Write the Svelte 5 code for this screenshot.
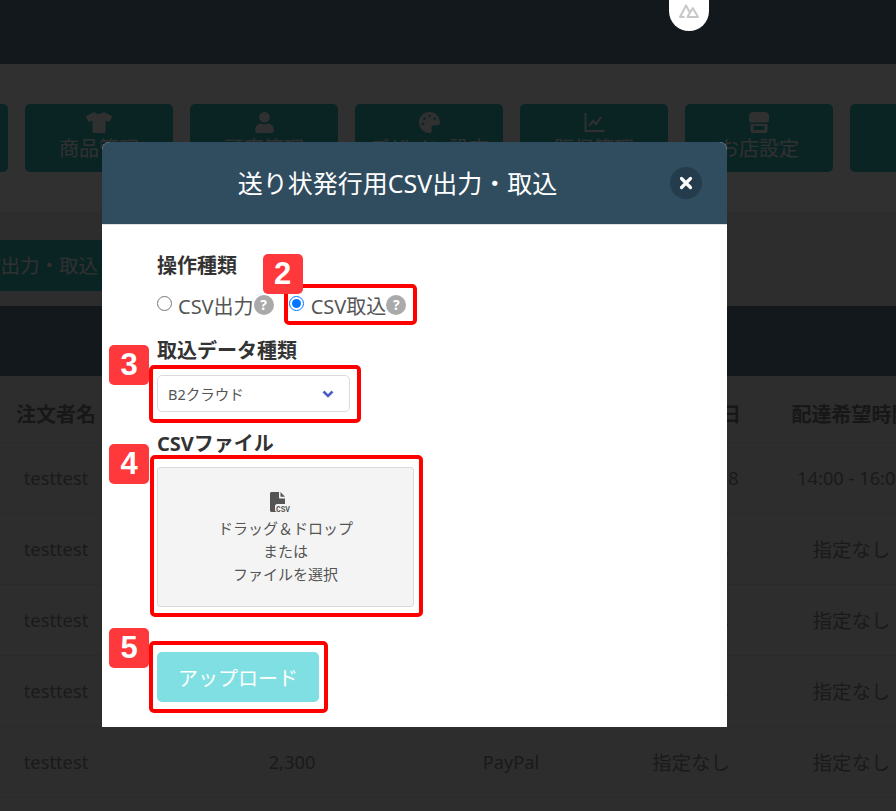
<script>
  const navItems = [
    { label: '受注管理', icon: 'none' },
    { label: '商品管理', icon: 'shirt' },
    { label: '顧客管理', icon: 'user' },
    { label: 'デザイン設定', icon: 'palette' },
    { label: '販促管理', icon: 'chart' },
    { label: 'お店設定', icon: 'store' },
    { label: 'ヘルプ', icon: 'none' }
  ]
  const rows = [
    { date: '2024-01-18', time: '14:00 - 16:00' },
    { date: '指定なし', time: '指定なし' },
    { date: '指定なし', time: '指定なし' },
    { date: '指定なし', time: '指定なし' },
    { date: '指定なし', time: '指定なし' }
  ]
</script>

<div class="page">
  <header class="topbar"></header>

  <nav class="menu">
    {#each navItems as item}
      <div class="menuBtn">
        <span class="menuIcon">
          {#if item.icon === 'shirt'}
            <svg width="26" height="21" viewBox="0 0 640 512"><path fill="currentColor" d="M631.2 96.5L436.5 0C416.4 27.8 371.9 47.2 320 47.2S223.6 27.8 203.5 0L8.8 96.5c-7.9 4-11.1 13.6-7.2 21.5l57.2 114.5c4 7.9 13.6 11.1 21.5 7.2l56.6-27.7c10.6-5.2 23 2.5 23 14.4V480c0 17.7 14.3 32 32 32h256c17.7 0 32-14.3 32-32V226.3c0-11.8 12.4-19.6 23-14.4l56.6 27.7c7.9 4 17.5.8 21.5-7.2L638.3 118c4-7.9.8-17.6-7.1-21.5z"/></svg>
          {:else if item.icon === 'user'}
            <svg width="19" height="21" viewBox="0 0 448 512"><path fill="currentColor" d="M224 256c70.7 0 128-57.3 128-128S294.7 0 224 0 96 57.3 96 128s57.3 128 128 128zm89.6 32h-16.7c-22.2 10.2-46.9 16-72.9 16s-50.6-5.8-72.9-16h-16.7C60.2 288 0 348.2 0 422.4V464c0 26.5 21.5 48 48 48h352c26.5 0 48-21.5 48-48v-41.6c0-74.2-60.2-134.4-134.4-134.4z"/></svg>
          {:else if item.icon === 'palette'}
            <svg width="21" height="21" viewBox="0 0 512 512"><path fill="currentColor" d="M204.3 5C104.9 24.4 24.8 104.3 5.2 203.4c-37 187 131.7 326.4 258.8 306.7 41.2-6.4 61.4-54.6 42.5-91.7-23.1-45.4 9.9-98.4 60.9-98.4h79.7c35.8 0 64.8-29.6 64.9-65.3C511.5 97.1 368.1-26.9 204.3 5zM96 320c-17.7 0-32-14.3-32-32s14.3-32 32-32 32 14.3 32 32-14.3 32-32 32zm32-128c-17.7 0-32-14.3-32-32s14.3-32 32-32 32 14.3 32 32-14.3 32-32 32zm128-64c-17.7 0-32-14.3-32-32s14.3-32 32-32 32 14.3 32 32-14.3 32-32 32zm128 64c-17.7 0-32-14.3-32-32s14.3-32 32-32 32 14.3 32 32-14.3 32-32 32z"/></svg>
          {:else if item.icon === 'chart'}
            <svg width="21" height="21" viewBox="0 0 21 21"><path fill="none" stroke="currentColor" stroke-width="2" d="M1.500 1v18h19M5 14l4-5 3 3 5-7"/></svg>
          {:else if item.icon === 'store'}
            <svg width="20" height="21" viewBox="0 0 20 21"><path fill="currentColor" d="M4 0h12c2 0 4 2 4 4v4c0 1.500-1 2.500-2.500 2.500h-15C1 10.500 0 9.500 0 8V4c0-2 2-4 4-4zM1.500 12h17v7c0 1-1 2-2 2h-13c-1 0-2-1-2-2zm3 2v4h11v-4z"/></svg>
          {/if}
        </span>
        <span class="menuLabel">{item.label}</span>
      </div>
    {/each}
  </nav>

  <section class="action">
    <div class="actionBtn">送り状発行用CSV出力・取込</div>
  </section>

  <div class="tableBar"></div>

  <table class="orders">
    <colgroup>
      <col style="width: 112px" />
      <col style="width: 360px" />
      <col style="width: 78px" />
      <col style="width: 222px" />
      <col style="width: 159px" />
    </colgroup>
    <thead>
      <tr>
        <th>注文者名</th>
        <th>合計金額</th>
        <th>決済</th>
        <th>配達希望日</th>
        <th>配達希望時間</th>
      </tr>
    </thead>
    <tbody>
      {#each rows as row}
        <tr>
          <td>testtest</td>
          <td>2,300</td>
          <td>PayPal</td>
          <td class:ja={row.date === '指定なし'}>{row.date}</td>
          <td class:ja={row.time === '指定なし'}>{row.time}</td>
        </tr>
      {/each}
    </tbody>
  </table>
</div>

<div class="overlay"></div>

<div class="devTab">
  <svg width="20" height="14" viewBox="0 0 20 14"><path fill="none" stroke="#c8c8c8" stroke-width="2" stroke-linejoin="round" d="M5.500 13H1L7 1.500l3.500 6.500M8.500 13H19L13.700 4 8.500 13z"/></svg>
</div>

<div class="modal">
  <div class="modalHead">
    <h2>送り状発行用CSV出力・取込</h2>
    <button class="close" aria-label="閉じる">
      <svg width="14" height="14" viewBox="0 0 14 14"><path stroke="#fff" stroke-width="3.200" stroke-linecap="round" d="M2.500 2.500l9 9M11.500 2.500l-9 9"/></svg>
    </button>
  </div>

  <div class="modalBody">
    <div class="fieldLabel first">操作種類</div>
    <div class="radios">
      <label class="radio">
        <input type="radio" name="mode" />
        <span>CSV出力</span>
        <i class="help">?</i>
      </label>
      <label class="radio picked">
        <input type="radio" name="mode" checked />
        <span>CSV取込</span>
        <i class="help">?</i>
        <span class="hl hl2"></span>
        <b class="badge badge2">2</b>
      </label>
    </div>

    <div class="fieldLabel second">取込データ種類</div>
    <div class="selectWrap">
      <select>
        <option>B2クラウド</option>
      </select>
      <svg class="chevron" width="12" height="8" viewBox="0 0 12 8"><path fill="none" stroke="#4a5fc1" stroke-width="2.600" d="M1.500 1.500L6 6l4.500-4.500"/></svg>
      <span class="hl hl3"></span>
      <b class="badge badge3">3</b>
    </div>

    <div class="fieldLabel third">CSVファイル</div>
    <div class="drop">
      <svg width="22" height="22" viewBox="0 0 22 22" class="csvIcon">
        <path fill="#555" d="M1 1.500C1 .7 1.700 0 2.500 0H10v5.500c0 .6.400 1 1 1h5V12H8c-1 0-2 1-2 2v4c0 1 1 2 2 2H2.500C1.700 20 1 19.300 1 18.500z"/>
        <path fill="#555" d="M11.500 0L16 4.800h-4.500z"/>
        <text x="7" y="19.800" class="csvText" textLength="14" lengthAdjust="spacingAndGlyphs">CSV</text>
      </svg>
      <p>ドラッグ＆ドロップ</p>
      <p>または</p>
      <p>ファイルを選択</p>
      <span class="hl hl4"></span>
      <b class="badge badge4">4</b>
    </div>

    <div class="uploadWrap">
      <button class="upload">アップロード</button>
      <span class="hl hl5"></span>
      <b class="badge badge5">5</b>
    </div>
  </div>
</div>

<style>
  :global(body) {
    margin: 0;
    overflow: hidden;
    font-family: "Noto Sans", "Noto Sans CJK JP", sans-serif;
  }
  .page {
    width: 896px;
    height: 811px;
    overflow: hidden;
    background: #ededed;
    color: #888;
  }
  .topbar {
    height: 64px;
    background: #5f7e8e;
  }
  .menu {
    height: 148px;
    box-sizing: border-box;
    padding-top: 40px;
    background: #fff;
    display: flex;
    gap: 17px;
  }
  .menuBtn {
    flex: 0 0 148px;
    height: 68px;
    border-radius: 5px;
    background: #35bebe;
    color: #fff;
    display: flex;
    flex-direction: column;
    align-items: center;
    padding-top: 8px;
    box-sizing: border-box;
  }
  .menuBtn:first-child {
    margin-left: -140px;
  }
  .menuIcon {
    height: 21px;
    display: block;
  }
  .menuLabel {
    font-size: 20px;
    line-height: 30px;
    margin-top: 1px;
    white-space: nowrap;
  }
  .action {
    height: 94px;
    box-sizing: border-box;
    padding-top: 28px;
  }
  .actionBtn {
    width: 330px;
    height: 51px;
    margin-left: -200px;
    background: #35bebe;
    color: #fff;
    font-size: 19.500px;
    line-height: 51px;
    text-align: right;
    padding-right: 32px;
    box-sizing: border-box;
    white-space: nowrap;
  }
  .tableBar {
    height: 70px;
    background: #5f7e8e;
  }
  .orders {
    width: 931px;
    table-layout: fixed;
    border-collapse: collapse;
    font-size: 18.300px;
  }
  .orders th {
    height: 66px;
    padding: 9px 0 0;
    box-sizing: border-box;
    font-size: 20px;
    font-weight: 700;
    color: #7c7c7c;
    white-space: nowrap;
    border-bottom: 1px solid #dcdcdc;
  }
  .orders td {
    height: 70px;
    padding: 0;
    text-align: center;
    color: #8c8c8c;
    white-space: nowrap;
    border-bottom: 1px solid #dcdcdc;
  }
  .orders td.ja {
    font-size: 19.500px;
  }
  .orders th:nth-child(4),
  .orders td:nth-child(4) {
    padding-left: 60px;
  }
  .overlay {
    position: fixed;
    inset: 0;
    background: rgba(0, 0, 0, 0.81);
  }
  .devTab {
    position: fixed;
    top: 0;
    left: 669px;
    width: 40px;
    height: 31px;
    background: #fff;
    border-radius: 0 0 20px 20px;
    display: flex;
    justify-content: center;
    padding-top: 4px;
    box-sizing: border-box;
  }
  .modal {
    position: fixed;
    left: 102px;
    top: 142px;
    width: 625px;
    height: 585px;
    background: #fff;
    border-radius: 8px 8px 0 0;
    color: #333;
  }
  .modalHead {
    height: 83px;
    box-sizing: border-box;
    padding-right: 34px;
    background: #304d60;
    border-bottom: 1px solid #dee2e6;
    border-radius: 8px 8px 0 0;
    display: flex;
    align-items: center;
    justify-content: center;
    position: relative;
  }
  .modalHead h2 {
    margin: 0;
    font-size: 25px;
    font-weight: 400;
    color: #fff;
    line-height: 86px;
  }
  .close {
    position: absolute;
    right: 25px;
    top: 25px;
    width: 32px;
    height: 32px;
    border: 0;
    padding: 0;
    border-radius: 50%;
    background: #243c4c;
    display: flex;
    align-items: center;
    justify-content: center;
  }
  .modalBody {
    padding: 0 0 0 55px;
  }
  .fieldLabel {
    font-size: 20px;
    font-weight: 700;
    line-height: 26px;
    color: #333;
  }
  .fieldLabel.first {
    padding-top: 28px;
  }
  .fieldLabel.second {
    margin-top: 18px;
  }
  .fieldLabel.third {
    margin-top: 19px;
  }
  .radios {
    display: flex;
    gap: 15px;
    margin-top: 11px;
    height: 30px;
  }
  .radio {
    position: relative;
    display: flex;
    align-items: center;
    height: 30px;
    font-size: 20px;
    color: #555;
  }
  .radio input {
    width: 15px;
    height: 15px;
    margin: 0 6px 0 0;
    position: relative;
    top: -2px;
  }
  .radio.picked input {
    margin-right: 7px;
  }
  .help {
    width: 20px;
    height: 20px;
    border-radius: 50%;
    background: #aaa;
    color: #fff;
    font-style: normal;
    font-weight: 700;
    font-size: 14px;
    line-height: 20px;
    text-align: center;
  }
  .hl {
    position: absolute;
    border: 4px solid #f00;
    border-radius: 5px;
    box-sizing: border-box;
    pointer-events: none;
  }
  .badge {
    position: absolute;
    width: 40px;
    height: 40px;
    border-radius: 5px;
    background: #ff383c;
    color: #fff;
    font-family: "Liberation Sans", sans-serif;
    font-weight: 700;
    font-size: 31px;
    line-height: 40px;
    text-align: center;
  }
  .hl2 {
    left: -5px;
    right: -11px;
    top: -6px;
    bottom: -5px;
  }
  .badge2 {
    left: -26px;
    top: -36px;
  }
  .selectWrap {
    position: relative;
    width: 193px;
    margin-top: 11px;
  }
  .selectWrap select {
    display: block;
    appearance: none;
    width: 100%;
    height: 37px;
    padding: 0 10px;
    border: 1px solid #dbdbdb;
    border-radius: 5px;
    background: #fff;
    color: #555;
    font-family: inherit;
    font-size: 14.500px;
  }
  .chevron {
    position: absolute;
    right: 16px;
    top: 15px;
  }
  .hl3 {
    left: -8px;
    right: -11px;
    top: -10px;
    bottom: -11px;
  }
  .badge3 {
    left: -48px;
    top: -30px;
  }
  .drop {
    position: relative;
    width: 257px;
    height: 140px;
    margin-top: 10px;
    box-sizing: border-box;
    padding-top: 24px;
    background: #f4f4f4;
    border: 1px solid #dbdbdb;
    border-radius: 3px;
    text-align: center;
    color: #555;
    font-size: 15px;
  }
  .drop p {
    margin: 0;
    line-height: 23px;
  }
  .csvIcon {
    display: block;
    margin: 0 auto 3px;
    position: relative;
    left: -6px;
  }
  .csvText {
    font-family: "Liberation Mono", monospace;
    font-weight: 700;
    font-size: 8.500px;
    fill: #555;
  }
  .hl4 {
    left: -8px;
    right: -10px;
    top: -13px;
    bottom: -11px;
  }
  .badge4 {
    left: -49px;
    top: -24px;
  }
  .uploadWrap {
    position: relative;
    width: 162px;
    margin-top: 45px;
  }
  .upload {
    display: block;
    width: 162px;
    height: 50px;
    border: 0;
    border-radius: 5px;
    background: #7fdfe2;
    color: #fff;
    font-family: inherit;
    font-size: 20px;
  }
  .hl5 {
    left: -8px;
    right: -9px;
    top: -11px;
    bottom: -11px;
  }
  .badge5 {
    left: -48px;
    top: -24px;
  }
</style>
